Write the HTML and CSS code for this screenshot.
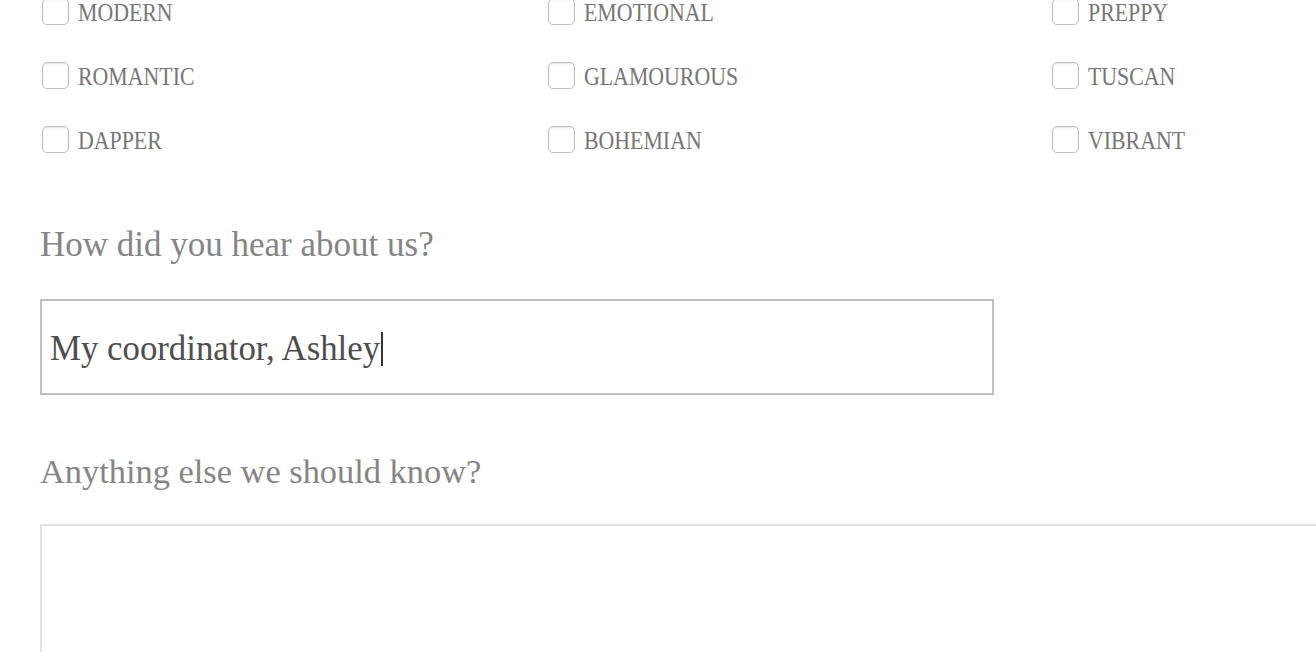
FILE: index.html
```html
<!DOCTYPE html>
<html lang="en">

<head>
    <meta charset="UTF-8">
    <meta name="viewport" content="width=device-width, initial-scale=1.0">
    <title>Wedding Questionnaire</title>
    <link rel="stylesheet" href="styles.css">
</head>

<body>
    <div class="wrapper">
        <div class="styles">
            <label class="option"><input type="checkbox"><span>Modern</span></label>
            <label class="option"><input type="checkbox"><span>Emotional</span></label>
            <label class="option"><input type="checkbox"><span>Preppy</span></label>
            <label class="option"><input type="checkbox"><span>Romantic</span></label>
            <label class="option"><input type="checkbox"><span>Glamourous</span></label>
            <label class="option"><input type="checkbox"><span>Tuscan</span></label>
            <label class="option"><input type="checkbox"><span>Dapper</span></label>
            <label class="option"><input type="checkbox"><span>Bohemian</span></label>
            <label class="option"><input type="checkbox"><span>Vibrant</span></label>
        </div>

        <div class="field">
            <label class="fieldLabel" for="heard">How did you hear about us?</label>
            <div class="textInput">
                <span id="heard">My coordinator, Ashley</span><span class="caret"></span>
            </div>
        </div>

        <div class="field">
            <label class="fieldLabel notesLabel" for="notes">Anything else we should know?</label>
            <textarea id="notes" class="notes"></textarea>
        </div>
    </div>
</body>

</html>
```

FILE: styles.css
```css
html, body {
    height: 100%;
}

body {
    margin: 0;
    padding: 0;
    background-color: #fff;
    overflow: hidden;
    font-family: "Liberation Serif", "Times New Roman", serif;
}

.wrapper {
    padding-left: 40px;
}

.styles {
    display: grid;
    grid-template-columns: 506px 504px 1fr;
    row-gap: 37px;
    margin-top: -2px;
}

.option {
    display: flex;
    align-items: center;
    gap: 9px;
    padding-left: 2px;
    height: 27px;
}

.option input {
    appearance: none;
    -webkit-appearance: none;
    width: 27px;
    height: 27px;
    margin: 0;
    border: 1px solid #bdbdbd;
    border-radius: 5px;
    background-color: #fff;
    box-shadow: inset 0 1px 2px rgba(0, 0, 0, 0.1);
}

.option span {
    display: inline-block;
    font-size: 26px;
    line-height: 27px;
    text-transform: uppercase;
    color: #767676;
    transform: scaleX(0.84);
    transform-origin: left center;
    margin-top: 2px;
}

.field {
    display: flex;
    flex-direction: column;
}

.styles + .field {
    margin-top: 72px;
}

.field + .field {
    margin-top: 56px;
}

.fieldLabel {
    font-size: 35px;
    line-height: 40px;
    color: #858585;
    margin-bottom: 34px;
}

.notesLabel {
    font-size: 34.4px;
    margin-bottom: 33px;
}

.textInput {
    display: flex;
    align-items: center;
    box-sizing: border-box;
    width: 954px;
    height: 96px;
    padding: 4px 8px 0;
    border: 2px solid #c0c0c0;
    font-size: 34.8px;
    color: #4d4d4d;
}

.caret {
    display: inline-block;
    width: 2px;
    height: 34px;
    margin-left: 1px;
    background-color: #333;
}

.notes {
    box-sizing: border-box;
    width: 1320px;
    height: 200px;
    border: 2px solid #e2e2e2;
    resize: none;
}
```
